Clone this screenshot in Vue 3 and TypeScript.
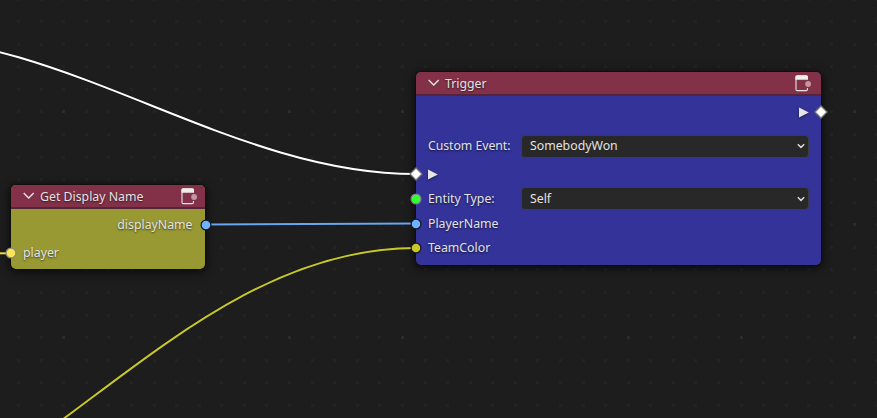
<script setup lang="ts">
interface Row {
  label?: string
  value?: string
  exec?: boolean
  side: 'left' | 'right'
  socket?: 'diamond' | 'dot'
  color?: string
  rim?: string
  size: string
}
interface NodeItem {
  id: string
  title: string
  rows: Row[]
}

const nodes: NodeItem[] = [
  {
    id: 'display',
    title: 'Get Display Name',
    rows: [
      { label: 'displayName', side: 'right', socket: 'dot', color: '#70b2ff', rim: '#111820', size: 'out' },
      { label: 'player', side: 'left', socket: 'dot', color: '#ffe556', rim: '#88887c', size: 'in' },
    ],
  },
  {
    id: 'trigger',
    title: 'Trigger',
    rows: [
      { exec: true, side: 'right', socket: 'diamond', size: 'exec-out' },
      { label: 'Custom Event:', value: 'SomebodyWon', side: 'left', size: 'event' },
      { exec: true, side: 'left', socket: 'diamond', size: 'exec-in' },
      { label: 'Entity Type:', value: 'Self', side: 'left', socket: 'dot', color: '#33ff33', rim: '#80808a', size: 'entity' },
      { label: 'PlayerName', side: 'left', socket: 'dot', color: '#70b2ff', rim: '#111820', size: 'player' },
      { label: 'TeamColor', side: 'left', socket: 'dot', color: '#c7c729', rim: '#111820', size: 'team' },
    ],
  },
]

const snap = (i: number, origin: number): number => Math.floor(origin + i * 22.58)
const majorColumns = [3, 13, 18, 28, 33, 38]
const majorRows = [5, 15]
const dots: { x: number; y: number; major: boolean }[] = []
for (let r = 0; r < 19; r++) {
  for (let c = 0; c < 40; c++) {
    const major = (majorColumns.includes(c) && majorRows.includes(r)) || (c === 38 && r === 10)
    dots.push({ x: snap(c, -5), y: snap(r, -2), major })
  }
}
</script>

<template>
  <main class="canvas">
    <svg class="wires" width="877" height="418" viewBox="0 0 877 418">
      <rect
        v-for="(d, i) in dots" :key="i" :x="d.x" :y="d.y" width="3" height="3"
        :class="d.major ? 'major' : 'minor'"
      />
    </svg>
    <section v-for="node in nodes" :key="node.id" class="node" :class="node.id">
      <header class="head">
        <svg class="chevron" width="12" height="8" viewBox="0 0 12 8">
          <path d="M.7 1 L5.7 6 L10.7 1" />
        </svg>
        <span class="title">{{ node.title }}</span>
        <svg class="badge" width="17" height="17" viewBox="0 0 17 17">
          <path class="frame" d="M12.4 4V2.2Q12.4 1 11.3 1H2.2Q1 1 1 2.2V14.4Q1 15.6 2.2 15.6H11.2Q12.4 15.6 12.4 14.4V13" />
          <path class="bar" d="M.4 2Q.4.3 2 .3H11.4Q13 .3 13 2V4.7H.4Z" />
          <circle cx="13.1" cy="9" r="2.9" />
        </svg>
      </header>
      <div class="body">
        <div v-for="(row, i) in node.rows" :key="i" class="row" :class="[row.side, row.size]">
          <svg v-if="row.exec" class="arrow" width="10" height="11" viewBox="0 0 10 11">
            <path d="M0 .5 L9.8 5.5 L0 10.5Z" />
          </svg>
          <span v-if="row.label" class="label">{{ row.label }}</span>
          <div v-if="row.value" class="select">
            <span>{{ row.value }}</span>
            <svg width="8" height="6" viewBox="0 0 8 6"><path d="M.8 1.2 L4 4.4 L7.2 1.2" /></svg>
          </div>
          <svg v-if="row.socket" class="socket" width="14" height="14" viewBox="0 0 14 14">
            <path v-if="row.socket === 'diamond'" d="M7 1 L13 7 L7 13 L1 7Z" fill="#fff" stroke="#777" stroke-width="1.3" />
            <circle v-else cx="7" cy="7" r="4.9" :fill="row.color" :stroke="row.rim" stroke-width="1.2" />
          </svg>
        </div>
      </div>
    </section>
    <svg class="wires links" width="877" height="418" viewBox="0 0 877 418">
      <path class="halo" d="M-116 36 C70 36 230 174 416 174" />
      <path stroke="#fff" d="M-116 36 C70 36 230 174 416 174" />
      <path class="halo" d="M206 224.6 L416 223.4" />
      <path stroke="#69a7ef" d="M206 224.6 L416 223.4" />
      <path class="halo" d="M-236 550 C14 550 166 248 416 248" />
      <path stroke="#c7c729" d="M-236 550 C14 550 166 248 416 248" />
      <path stroke="#f0d83f" d="M0 253.3 H6" />
    </svg>
  </main>
</template>

<style>
body { background: #1d1d1d; overflow: hidden; }
</style>

<style scoped>
.canvas {
  position: relative;
  width: 877px;
  height: 418px;
  overflow: hidden;
  background: #1d1d1d;
  color: #e3e3e3;
  font: 12.3px/16px "Noto Sans", sans-serif;
}
.wires { position: absolute; left: 0; top: 0; }
.links { pointer-events: none; z-index: 1; }
.links path { fill: none; stroke-width: 2; }
.links .halo { stroke: #141414; stroke-width: 3.2; opacity: .6; }
.minor { fill: #232323; }
.major { fill: #2b2b2b; }
.node {
  position: absolute;
  border-radius: 5px;
  box-shadow: 0 0 0 1px rgba(10, 10, 10, .45), 0 2px 9px 2px rgba(0, 0, 0, .58);
  text-shadow: 0 1px 2px rgba(0, 0, 0, .65);
}
.display { left: 11px; top: 185px; width: 194px; height: 84px; background: #999933; }
.trigger { left: 416px; top: 72px; width: 405px; height: 193px; background: #333399; }
.head {
  display: flex;
  align-items: center;
  box-sizing: border-box;
  height: 24px;
  padding: 0 7px 0 12px;
  border-radius: 5px 5px 0 0;
  border-bottom: 2px solid #55243a;
  background: #833149;
}
.trigger .head { padding-right: 9px; }
.chevron { margin: 0 5px 1px 0; }
.chevron path { fill: none; stroke: #e6e6e6; stroke-width: 1.3; }
.title { flex: 1; padding-top: 1px; }
.badge { margin-top: 1px; }
.badge .frame { fill: none; stroke: #e6e6e6; stroke-width: 1.1; }
.badge .bar { fill: #ededed; }
.badge circle { fill: #c295a2; }
.row { position: relative; display: flex; align-items: center; padding: 0 12px; }
.row.right { justify-content: flex-end; }
.row.out { height: 31px; padding-right: 12.5px; }
.row.in { height: 25px; }
.row.exec-out { height: 32px; }
.row.event { height: 36px; }
.row.exec-in { height: 20.5px; }
.row.entity { height: 28px; }
.row.player { height: 23px; }
.row.team { height: 24px; }
.arrow path { fill: #e6e6e6; }
.arrow { filter: drop-shadow(0 1px 1px rgba(0, 0, 0, .5)); }
.label { white-space: nowrap; }
.event .label { letter-spacing: -.06px; }
.select {
  display: flex;
  align-items: center;
  justify-content: space-between;
  box-sizing: border-box;
  width: 288px;
  height: 23px;
  margin-left: auto;
  padding: 0 3px 0 8px;
  border: 1px solid #3d3d3d;
  border-radius: 4px;
  background: #282828;
  text-shadow: none;
}
.select path { fill: none; stroke: #d9d9d9; stroke-width: 1.5; }
.socket { position: absolute; top: calc(50% - 7px); z-index: 2; }
.left .socket { left: -7.3px; }
.right .socket { right: -7px; }
.out .socket { right: -7.6px; }
</style>
